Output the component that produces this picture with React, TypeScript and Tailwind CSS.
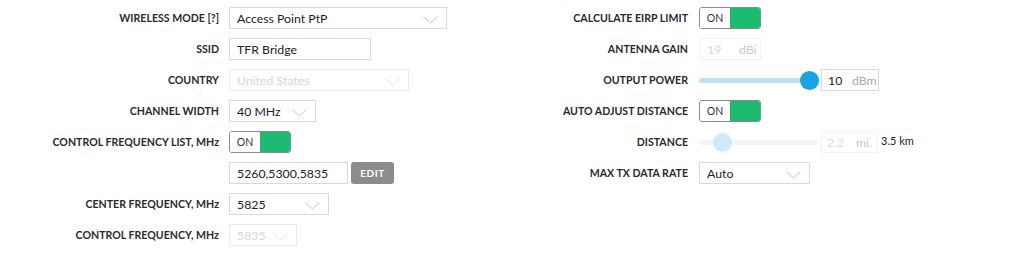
import React from "react";

// chevron used by every select box
const Chevron = ({ light }: { light?: boolean }) => (
  <svg width="15" height="8" viewBox="0 0 15 8" className="shrink-0 mt-[2px]">
    <polyline
      points="0.5,0.5 7.5,7 14.5,0.5"
      fill="none"
      stroke={light ? "#e4e4e4" : "#c4c4c4"}
      strokeWidth="1"
    />
  </svg>
);

const Select = ({ value, w, disabled }: { value: string; w: string; disabled?: boolean }) => (
  <div
    className={`${w} h-[22px] flex items-center justify-between pl-[7px] pr-[8px] pt-[2px] border ${
      disabled ? "border-[#ececec] text-[#d6d6d6]" : "border-[#d9d9d9] text-[#222]"
    } text-[12.3px]`}
  >
    <span>{value}</span>
    <Chevron light={disabled} />
  </div>
);

const Toggle = () => (
  <div className="w-[62px] h-[22px] flex border border-[#8a8a8a] rounded-[3px] overflow-hidden">
    <div className="w-[30px] pt-[1px] flex items-center justify-center text-[10.5px] text-[#333] bg-white">ON</div>
    <div className="flex-1 bg-[#1dbb72]" />
  </div>
);

const Label = ({ children }: { children: React.ReactNode }) => (
  <div className="h-[22px] pt-[2px] flex items-center justify-end text-[10.6px] font-bold text-[#2a2a2a] whitespace-nowrap">
    {children}
  </div>
);

const Slider = ({ pos, active }: { pos: string; active?: boolean }) => (
  <div className="relative w-[119px] h-[22px] flex items-center">
    <div className={`w-full h-[5px] rounded-full ${active ? "bg-[#bfe2f3]" : "bg-[#eef6fb]"}`} />
    <div
      className={`absolute top-[2px] w-[19px] h-[19px] rounded-full ${pos} ${
        active ? "bg-[#1ba2e6]" : "bg-[#cfe9f7]"
      }`}
    />
  </div>
);

export default function App() {
  return (
    <div
      className="w-[1032px] h-[276px] bg-white flex pt-[7px]"
      style={{ fontFamily: "Lato, 'Open Sans', sans-serif" }}
    >
      {/* left column */}
      <div className="w-[500px] grid grid-cols-[219px_1fr] gap-x-[10px] gap-y-[9px] content-start">
        <Label>WIRELESS MODE [?]</Label>
        <Select value="Access Point PtP" w="w-[218px]" />

        <Label>SSID</Label>
        <div className="w-[142px] h-[22px] flex items-center pl-[7px] pt-[2px] border border-[#d9d9d9] text-[12.3px] text-[#222]">
          TFR Bridge
        </div>

        <Label>COUNTRY</Label>
        <Select value="United States" w="w-[180px]" disabled />

        <Label>CHANNEL WIDTH</Label>
        <Select value="40 MHz" w="w-[87px]" />

        <Label>CONTROL FREQUENCY LIST, MHz</Label>
        <Toggle />

        <div />
        <div className="flex gap-[3px]">
          <div className="w-[119px] h-[22px] flex items-center pl-[7px] pt-[2px] border border-[#d9d9d9] text-[12.3px] text-[#222]">
            5260,5300,5835
          </div>
          <div className="w-[43px] h-[22px] pt-[1px] rounded-[3px] bg-[#8c8c8c] text-white text-[10px] font-bold tracking-[0.5px] flex items-center justify-center">
            EDIT
          </div>
        </div>

        <Label>CENTER FREQUENCY, MHz</Label>
        <Select value="5825" w="w-[100px]" />

        <Label>CONTROL FREQUENCY, MHz</Label>
        <Select value="5835" w="w-[68px]" disabled />
      </div>

      {/* right column */}
      <div className="w-[500px] grid grid-cols-[188px_1fr] gap-x-[11px] gap-y-[9px] content-start">
        <Label>CALCULATE EIRP LIMIT</Label>
        <Toggle />

        <Label>ANTENNA GAIN</Label>
        <div className="w-[62px] h-[22px] pt-[2px] flex items-center border border-[#f2f2f2] text-[12.3px] text-[#d6d6d6]">
          <span className="w-[39px] pl-[7px]">19</span>
          <span className="text-[#c9c9c9]">dBi</span>
        </div>

        <Label>OUTPUT POWER</Label>
        <div className="flex items-center gap-[3px]">
          <Slider pos="left-[101px]" active />
          <div className="w-[58px] h-[22px] pt-[2px] flex items-center border border-[#d9d9d9] text-[12.3px]">
            <span className="w-[30px] pl-[6px] text-[#222]">10</span>
            <span className="text-[#aaa]">dBm</span>
          </div>
        </div>

        <Label>AUTO ADJUST DISTANCE</Label>
        <Toggle />

        <Label>DISTANCE</Label>
        <div className="flex items-center gap-[3px]">
          <Slider pos="left-[14px]" />
          <div className="w-[57px] h-[22px] pt-[2px] flex items-center border border-[#f4f4f4] text-[12.3px]">
            <span className="w-[34px] pl-[5px] text-[#dcdcdc]">2.2</span>
            <span className="text-[#c4c4c4]">mi.</span>
          </div>
          <span className="text-[11px] text-[#222] -mt-[1px]">3.5 km</span>
        </div>

        <Label>MAX TX DATA RATE</Label>
        <Select value="Auto" w="w-[111px]" />
      </div>
    </div>
  );
}
